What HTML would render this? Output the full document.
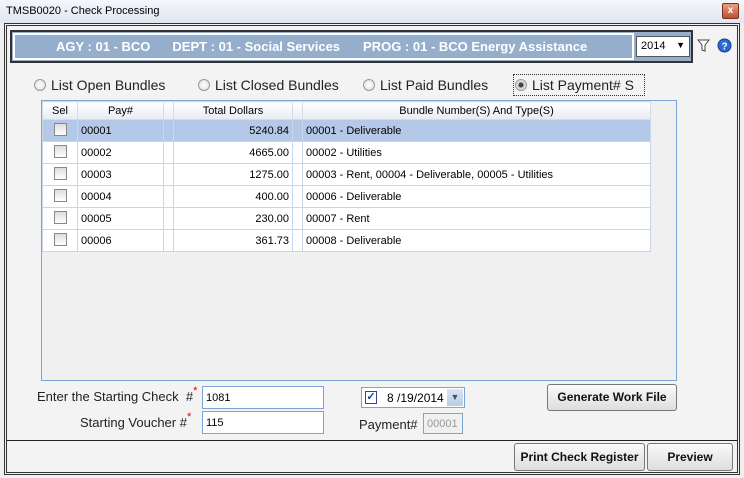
<!DOCTYPE html>
<html><head><meta charset="utf-8"><style>
*{box-sizing:border-box;margin:0;padding:0}
body{width:744px;height:478px;overflow:hidden;background:#f0f0f0;font-family:"Liberation Sans",sans-serif;font-size:11px;color:#000;position:relative}
.a{position:absolute;white-space:nowrap}
.title{left:0;top:0;width:744px;height:23px;background:linear-gradient(#f4f7fb,#dfe6ef);font-size:11px;padding:5px 0 0 6px}
.close{left:722px;top:3px;width:17px;height:16px;background:linear-gradient(#e8a080,#c0502e);border:1px solid #7a3020;border-radius:2px;color:#fff;font-size:10px;font-weight:bold;text-align:center;line-height:14px}
.frame{left:4px;top:23px;width:736px;height:452px;border:3px double #333;background:#f3f3f3}
.hdrbox{left:10px;top:30px;width:683px;height:33px;background:#94aecb;border:2px solid #333}
.blue{left:13px;top:33px;width:621px;height:27px;border:2px solid #fff;background:#94aecb;color:#fff;font-weight:bold;font-size:13px;line-height:23px}
.sel{left:636px;top:36px;width:54px;height:21px;background:#fff;border:1px solid #555;font-size:11px;padding:3px 0 0 4px}
.radio{top:77px;font-size:14px;color:#222}
.rb{display:inline-block;width:12px;height:12px;border-radius:50%;border:1px solid #999;background:radial-gradient(#fff,#ddd);vertical-align:-1px;margin-right:5px;position:relative}
.grid{left:41px;top:100px;width:636px;height:281px;border:1px solid #7ea4d6;background:#f0f0f0}
table{border-collapse:collapse;position:absolute;left:0;top:0;width:609px;font-size:11px}
td{border:1px solid #c9d6ea;height:22px;padding:0 3px;background:#fff}
th{height:18px;font-weight:normal;border:1px solid #d4dce8;background:linear-gradient(#fff,#e6ecf4)}
tr.s td{background:#b4c8e8}
.cb{display:inline-block;width:13px;height:13px;border:1px solid #888;background:linear-gradient(#ddd,#fff)}
.lbl{font-size:13px;color:#222;line-height:15px}
.inp{background:#fff;border:1px solid #7ea4d6;height:23px;font-size:11px;padding:5px 0 0 3px}
.btn{border:1px solid #777;border-radius:3px;background:linear-gradient(#fafafa,#ddd);font-weight:bold;font-size:12px;text-align:center;color:#111}
.star{color:#d00;font-size:11px;position:relative;top:-7px}
</style></head><body>
<div class="a title">TMSB0020 - Check Processing</div>
<div class="a close">x</div>
<div class="a frame"></div>
<div class="a hdrbox"></div>
<div class="a blue"><span style="margin-left:41px">AGY : 01 - BCO</span><span style="margin-left:22px">DEPT : 01 - Social Services</span><span style="margin-left:23px">PROG : 01 - BCO Energy Assistance</span></div>
<div class="a sel">2014<span style="position:absolute;right:4px;top:3px;font-size:9px">▼</span></div>
<svg class="a" style="left:697px;top:39px" width="13" height="13"><path d="M1 1H12L8 6V12L5 11V6Z" fill="#fff" stroke="#444"/></svg>
<svg class="a" style="left:717px;top:38px" width="15" height="15"><circle cx="7.5" cy="7.5" r="6.5" fill="#2a6ad8" stroke="#1a3c90"/><text x="7.5" y="11.5" font-size="10" font-weight="bold" fill="#fff" text-anchor="middle" font-family="Liberation Sans">?</text></svg>
<div class="a radio" style="left:34px"><span class="rb"></span>List Open Bundles</div>
<div class="a radio" style="left:198px"><span class="rb"></span>List Closed Bundles</div>
<div class="a radio" style="left:363px"><span class="rb"></span>List Paid Bundles</div>
<div class="a radio" style="left:513px;top:74px;border:1px dotted #333;padding:2px 10px 2px 1px"><span class="rb" style="background:radial-gradient(#345 30%,#ccc 40%,#fff)"></span>List Payment# S</div>
<div class="a grid"><table>
<tr><th style="width:35px">Sel</th><th style="width:86px">Pay#</th><th style="width:10px"></th><th style="width:119px">Total Dollars</th><th style="width:10px"></th><th>Bundle Number(S) And Type(S)</th></tr>
<tr class="s"><td style="text-align:center"><span class="cb"></span></td><td>00001</td><td></td><td style="text-align:right">5240.84</td><td></td><td>00001 - Deliverable</td></tr>
<tr><td style="text-align:center"><span class="cb"></span></td><td>00002</td><td></td><td style="text-align:right">4665.00</td><td></td><td>00002 - Utilities</td></tr>
<tr><td style="text-align:center"><span class="cb"></span></td><td>00003</td><td></td><td style="text-align:right">1275.00</td><td></td><td>00003 - Rent, 00004 - Deliverable, 00005 - Utilities</td></tr>
<tr><td style="text-align:center"><span class="cb"></span></td><td>00004</td><td></td><td style="text-align:right">400.00</td><td></td><td>00006 - Deliverable</td></tr>
<tr><td style="text-align:center"><span class="cb"></span></td><td>00005</td><td></td><td style="text-align:right">230.00</td><td></td><td>00007 - Rent</td></tr>
<tr><td style="text-align:center"><span class="cb"></span></td><td>00006</td><td></td><td style="text-align:right">361.73</td><td></td><td>00008 - Deliverable</td></tr>
</table></div>
<div class="a lbl" style="left:37px;top:389px">Enter the Starting Check &nbsp;#<span class="star">*</span></div>
<div class="a lbl" style="left:80px;top:415px">Starting Voucher #<span class="star">*</span></div>
<div class="a inp" style="left:202px;top:386px;width:122px">1081</div>
<div class="a inp" style="left:202px;top:411px;width:122px">115</div>
<div class="a" style="left:361px;top:387px;width:104px;height:21px;background:#fff;border:1px solid #7ea4d6;font-size:12px;padding:3px 0 0 25px">8 /19/2014</div>
<div class="a" style="left:365px;top:391px;width:12px;height:13px;border:1px solid #2a4a8a;color:#1a3c90;font-size:11px;line-height:11px;text-align:center;font-weight:bold">✓</div>
<div class="a" style="left:447px;top:389px;width:16px;height:17px;background:linear-gradient(#dbe6f4,#b8cce6);color:#456;font-size:9px;text-align:center;line-height:17px">▼</div>
<div class="a lbl" style="left:359px;top:417px">Payment#</div>
<div class="a inp" style="left:423px;top:413px;width:40px;height:21px;color:#999;background:#f0f0f0;padding-top:4px">00001</div>
<div class="a btn" style="left:547px;top:384px;width:130px;height:27px;line-height:25px">Generate Work File</div>
<div class="a" style="left:7px;top:440px;width:730px;height:1px;background:#222"></div>
<div class="a btn" style="left:514px;top:443px;width:131px;height:28px;line-height:26px">Print Check Register</div>
<div class="a btn" style="left:647px;top:443px;width:86px;height:28px;line-height:26px">Preview</div>
</body></html>
